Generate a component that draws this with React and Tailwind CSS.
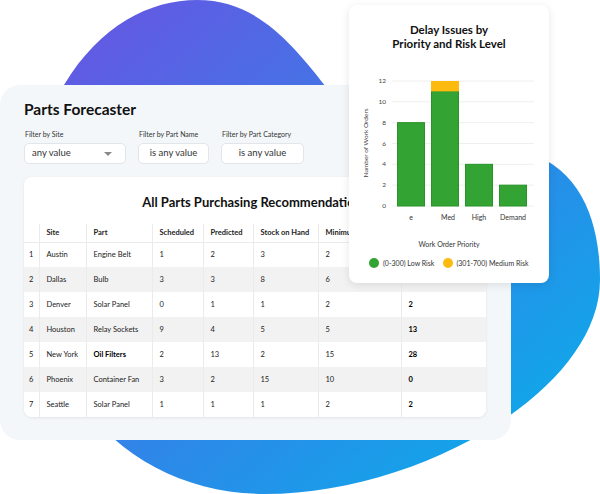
import React from 'react';

const rows = [
    { site: 'Austin', part: 'Engine Belt', sch: 1, pred: 2, stock: 3, min: 2, rec: 1 },
    { site: 'Dallas', part: 'Bulb', sch: 3, pred: 3, stock: 8, min: 6, rec: 4 },
    { site: 'Denver', part: 'Solar Panel', sch: 0, pred: 1, stock: 1, min: 2, rec: 2 },
    { site: 'Houston', part: 'Relay Sockets', sch: 9, pred: 4, stock: 5, min: 5, rec: 13 },
    { site: 'New York', part: 'Oil Filters', sch: 2, pred: 13, stock: 2, min: 15, rec: 28, bold: true },
    { site: 'Phoenix', part: 'Container Fan', sch: 3, pred: 2, stock: 15, min: 10, rec: 0 },
    { site: 'Seattle', part: 'Solar Panel', sch: 1, pred: 1, stock: 1, min: 2, rec: 2 },
];

const font = { fontFamily: 'Lato, "Noto Sans", sans-serif' };

const Blob = () => (
    <svg className="absolute inset-0" width="600" height="494" viewBox="0 0 600 494">
        <defs>
            <linearGradient id="blobGrad" x1="0" y1="0" x2="1" y2="1">
                <stop offset="0" stopColor="#6b52e2" />
                <stop offset="0.55" stopColor="#2f86e8" />
                <stop offset="1" stopColor="#05b3ea" />
            </linearGradient>
        </defs>
        <path
            d="M197 0 C255 0 290 40 330 92 C370 140 440 140 520 150 C580 165 600 220 600 280 C600 390 420 494 265 494 C190 494 120 460 80 400 C30 300 20 160 64 85 C100 25 150 0 197 0 Z"
            fill="url(#blobGrad)"
        />
    </svg>
);

const FilterBox = ({ label, value, width, dropdown }) => (
    <div className="flex flex-col" style={{ width }}>
        <span className="text-[7px] leading-[10px] text-[#333] pl-[1px] whitespace-nowrap">{label}</span>
        <div
            className={`mt-[4px] h-[21px] bg-white border border-[#e2e5ea] rounded-[5px] flex items-center text-[9.5px] text-[#333] ${dropdown ? 'pl-[7px] pr-[13px] justify-between' : 'justify-center'}`}
        >
            <span>{value}</span>
            {dropdown && (
                <svg width="8" height="4" viewBox="0 0 8 4">
                    <path d="M0 0 L8 0 L4 4 Z" fill="#8a8a8a" />
                </svg>
            )}
        </div>
    </div>
);

const cell = 'px-[7px] whitespace-nowrap overflow-hidden border-r border-[#ebebeb]';

const PartsTable = () => (
    <div className="w-[462px] h-[240px] bg-white rounded-[8px] shadow-[0_1px_3px_rgba(0,0,0,0.08)] overflow-hidden">
        <div className="pt-[18px] text-center text-[13px] leading-[14px] font-bold text-[#111] whitespace-nowrap">
            All Parts Purchasing Recommendations
        </div>
        <table className="mt-[15px] table-fixed border-collapse w-[462px] text-[7.5px] text-[#222]">
            <colgroup>
                <col style={{ width: 15 }} />
                <col style={{ width: 47 }} />
                <col style={{ width: 66 }} />
                <col style={{ width: 51 }} />
                <col style={{ width: 50 }} />
                <col style={{ width: 65 }} />
                <col style={{ width: 83 }} />
                <col style={{ width: 85 }} />
            </colgroup>
            <thead>
                <tr className="h-[18px] font-bold text-left border-b border-[#ebebeb]">
                    <th className="border-r border-[#ebebeb]"></th>
                    <th className={cell}>Site</th>
                    <th className={cell}>Part</th>
                    <th className={cell}>Scheduled</th>
                    <th className={cell}>Predicted</th>
                    <th className={cell}>Stock on Hand</th>
                    <th className={cell}>Minimum</th>
                    <th className="px-[7px] whitespace-nowrap">Recommended</th>
                </tr>
            </thead>
            <tbody>
                {rows.map((r, i) => (
                    <tr key={r.site} className={`h-[25px] ${i % 2 === 1 ? 'bg-[#f2f2f2]' : 'bg-white'}`}>
                        <td className="text-center border-r border-[#ebebeb]">{i + 1}</td>
                        <td className={cell}>{r.site}</td>
                        <td className={`${cell} ${r.bold ? 'font-bold text-black' : ''}`}>{r.part}</td>
                        <td className={cell}>{r.sch}</td>
                        <td className={cell}>{r.pred}</td>
                        <td className={cell}>{r.stock}</td>
                        <td className={cell}>{r.min}</td>
                        <td className="px-[7px] font-bold text-black">{r.rec}</td>
                    </tr>
                ))}
            </tbody>
        </table>
    </div>
);

const yAt = (v) => 151 - v * (125 / 12);

const DelayChart = () => {
    const bars = [
        { x: 48, label: 'e', low: 8, med: 0, lx: 62 },
        { x: 82, label: 'Med', low: 11, med: 1, lx: 99 },
        { x: 116, label: 'High', low: 4, med: 0, lx: 130 },
        { x: 150, label: 'Demand', low: 2, med: 0, lx: 164 },
    ];
    return (
        <div className="absolute left-[349px] top-[5px] z-20 w-[200px] h-[278px] bg-white rounded-[8px] shadow-[0_2px_8px_rgba(0,0,0,0.10)]">
            <div className="pt-[18px] text-center text-[11.5px] leading-[14px] font-bold text-[#111]">
                Delay Issues by
                <br />
                Priority and Risk Level
            </div>
            <svg width="200" height="175" viewBox="0 0 200 175" className="mt-[4px] block">
                {[0, 2, 4, 6, 8, 10, 12].map((v) => (
                    <g key={v}>
                        <line x1="43" x2="185" y1={yAt(v)} y2={yAt(v)} stroke="#eeeeee" strokeWidth="1" />
                        <text x="37" y={yAt(v) + 2} textAnchor="end" fontSize="6.5" fill="#444">{v}</text>
                    </g>
                ))}
                <text
                    x="0"
                    y="0"
                    transform="translate(19 88) rotate(-90)"
                    textAnchor="middle"
                    fontSize="6.5"
                    fill="#444"
                >
                    Number of Work Orders
                </text>
                {bars.map((b) => (
                    <g key={b.label}>
                        <rect
                            x={b.x + 0.5}
                            y={yAt(b.low)}
                            width="27"
                            height={151 - yAt(b.low)}
                            fill="#33a333"
                            stroke="#289428"
                            strokeWidth="1"
                        />
                        {b.med > 0 && (
                            <rect
                                x={b.x}
                                y={yAt(b.low + b.med)}
                                width="28"
                                height={yAt(b.low) - yAt(b.low + b.med)}
                                fill="#fdbb10"
                            />
                        )}
                        <text x={b.lx} y="165" textAnchor="middle" fontSize="7" fill="#333">{b.label}</text>
                    </g>
                ))}
            </svg>
            <div className="mt-[9px] text-center text-[7px] leading-[10px] text-[#333]">Work Order Priority</div>
            <div className="mt-[9px] flex items-center h-[10px] pl-[20px] text-[7px] leading-[10px] text-[#333] whitespace-nowrap">
                <span className="shrink-0 w-[10px] h-[10px] rounded-full bg-[#33a333]"></span>
                <span className="ml-[4px]">(0-300) Low Risk</span>
                <span className="shrink-0 ml-[9px] w-[10px] h-[10px] rounded-full bg-[#fdbb10]"></span>
                <span className="ml-[3px]">(301-700) Medium Risk</span>
            </div>
        </div>
    );
};

const App = () => {
    return (
        <div className="relative w-[600px] h-[494px] overflow-hidden bg-white" style={font}>
            <Blob />
            <div className="relative pt-[85px]">
                <div className="relative z-10 w-[511px] h-[355px] bg-[#f4f7fa] rounded-[20px] px-6 pt-[14px]">
                    <h1 className="text-[15.5px] leading-[20px] font-bold text-[#111]">Parts Forecaster</h1>
                    <div className="mt-[10px] flex gap-3">
                        <FilterBox label="Filter by Site" value="any value" width={102} dropdown />
                        <FilterBox label="Filter by Part Name" value="is any value" width={71} />
                        <FilterBox label="Filter by Part Category" value="is any value" width={83} />
                    </div>
                    <div className="mt-[13px]">
                        <PartsTable />
                    </div>
                </div>
            </div>
            <DelayChart />
        </div>
    );
};

export default App;
